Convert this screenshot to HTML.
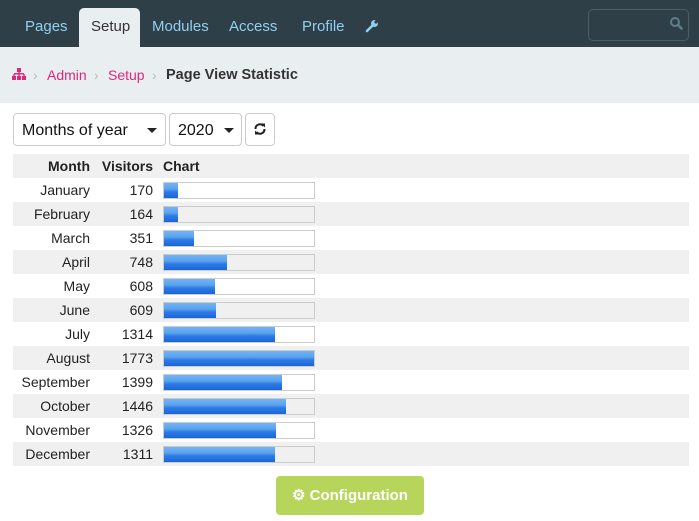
<!DOCTYPE html>
<html><head><style>
*{box-sizing:border-box;margin:0;padding:0}
body{width:699px;height:521px;background:#fff;font-family:"Liberation Sans",Arial,sans-serif;position:relative;overflow:hidden}
.nav{position:absolute;left:0;top:0;width:699px;height:47px;background:#2f3f47}
.nav span{position:absolute;top:18px;font-size:15px;color:#8fd0f0}
.tab{position:absolute;left:79px;top:8px;width:61px;height:39px;background:#e9eef1;border-radius:5px 5px 0 0}
.search{position:absolute;left:588px;top:9px;width:101px;height:32px;border:1px solid #4a5f68;border-radius:5px}
.bc{position:absolute;left:0;top:47px;width:699px;height:56px;background:#e9eef1}
.bc span{position:absolute;top:20px;font-size:14px;line-height:16px}
.sel{position:absolute;top:113px;height:33px;border:1px solid #ccc;border-radius:4px;font-size:16px;color:#111;padding:8px 0 0 8px}
.car{position:absolute;top:14px;width:0;height:0;border-left:5px solid transparent;border-right:5px solid transparent;border-top:5px solid #222}
table{position:absolute;left:13px;top:154px;width:676px;border-collapse:collapse;font-size:14px;color:#222}
td,th{height:24px;padding:0}
tr:nth-child(odd){background:#f0f0f0}
th{font-weight:bold;text-align:left}
.m{width:77px;text-align:right}
.v{width:63px;text-align:right}
.c{padding-left:10px}
.bar{width:152px;height:17px;border:1px solid #ccc;background:#fff;position:relative}
tr:nth-child(odd) .bar{background:#f0f0f0}
.bar i{position:absolute;left:0;top:0;height:15px;background:linear-gradient(#72b4f2 0%,#5aa2ee 40%,#2e7ae6 60%,#1a66d8 100%)}
.btn{position:absolute;left:276px;top:476px;width:148px;height:39px;background:#b6d55a;border-radius:4px;color:#fff;font-weight:bold;font-size:15px;text-align:center;line-height:39px}
</style></head><body>
<div class="nav">
<div class="tab"></div>
<span style="left:25px">Pages</span>
<span style="left:91px;color:#333">Setup</span>
<span style="left:152px">Modules</span>
<span style="left:229px">Access</span>
<span style="left:302px">Profile</span>
<svg style="position:absolute;left:365px;top:19px" width="14" height="14" viewBox="0 0 14 14"><path d="M2 12 L7.5 6.5" stroke="#8fd0f0" stroke-width="2.6" stroke-linecap="round"/><circle cx="9.5" cy="4.5" r="3.5" fill="#8fd0f0"/><circle cx="11" cy="3" r="1.6" fill="#2f3f47"/></svg>
<div class="search"><svg style="position:absolute;left:80px;top:6px" width="14" height="14" viewBox="0 0 14 14"><circle cx="6" cy="6" r="4" fill="none" stroke="#5e7e8c" stroke-width="2"/><path d="M9 9 L12.5 12.5" stroke="#5e7e8c" stroke-width="2.4" stroke-linecap="round"/></svg></div>
</div>
<div class="bc">
<svg style="position:absolute;left:12px;top:21px" width="14" height="12" viewBox="0 0 14 12"><rect x="5" y="0" width="4" height="4" fill="#e0287a"/><rect x="2" y="5" width="10" height="1.5" fill="#e0287a"/><rect x="0" y="8" width="4" height="4" fill="#e0287a"/><rect x="5" y="8" width="4" height="4" fill="#e0287a"/><rect x="10" y="8" width="4" height="4" fill="#e0287a"/><rect x="6.3" y="4" width="1.4" height="4" fill="#e0287a"/><rect x="1.3" y="6" width="1.4" height="2" fill="#e0287a"/><rect x="11.3" y="6" width="1.4" height="2" fill="#e0287a"/></svg>
<span style="left:33px;color:#bbb">›</span>
<span style="left:47px;color:#e0287a">Admin</span>
<span style="left:94px;color:#bbb">›</span>
<span style="left:108px;color:#e0287a">Setup</span>
<span style="left:152px;color:#bbb">›</span>
<span style="left:166px;color:#333;font-weight:bold;font-size:14.5px">Page View Statistic</span>
</div>
<div class="sel" style="left:13px;width:153px">Months of year<div class="car" style="left:133px"></div></div>
<div class="sel" style="left:169px;width:73px">2020<div class="car" style="left:54px"></div></div>
<div class="sel" style="left:245px;width:30px;height:33px;padding:0"><svg style="position:absolute;left:7px;top:8px" width="14" height="14" viewBox="0 0 14 14"><path d="M2.5 7 A4.5 4.5 0 0 1 10.5 4" fill="none" stroke="#222" stroke-width="2"/><path d="M8 1.5 L12 1.5 L12 5.5 Z" fill="#222"/><path d="M11.5 7 A4.5 4.5 0 0 1 3.5 10" fill="none" stroke="#222" stroke-width="2"/><path d="M6 12.5 L2 12.5 L2 8.5 Z" fill="#222"/></svg></div>
<table>
<tr><th class="m">Month</th><th class="v">Visitors</th><th class="c">Chart</th></tr>
<tr><td class="m">January</td><td class="v">170</td><td class="c"><div class="bar"><i style="width:14px"></i></div></td></tr>
<tr><td class="m">February</td><td class="v">164</td><td class="c"><div class="bar"><i style="width:14px"></i></div></td></tr>
<tr><td class="m">March</td><td class="v">351</td><td class="c"><div class="bar"><i style="width:30px"></i></div></td></tr>
<tr><td class="m">April</td><td class="v">748</td><td class="c"><div class="bar"><i style="width:63px"></i></div></td></tr>
<tr><td class="m">May</td><td class="v">608</td><td class="c"><div class="bar"><i style="width:51px"></i></div></td></tr>
<tr><td class="m">June</td><td class="v">609</td><td class="c"><div class="bar"><i style="width:52px"></i></div></td></tr>
<tr><td class="m">July</td><td class="v">1314</td><td class="c"><div class="bar"><i style="width:111px"></i></div></td></tr>
<tr><td class="m">August</td><td class="v">1773</td><td class="c"><div class="bar"><i style="width:150px"></i></div></td></tr>
<tr><td class="m">September</td><td class="v">1399</td><td class="c"><div class="bar"><i style="width:118px"></i></div></td></tr>
<tr><td class="m">October</td><td class="v">1446</td><td class="c"><div class="bar"><i style="width:122px"></i></div></td></tr>
<tr><td class="m">November</td><td class="v">1326</td><td class="c"><div class="bar"><i style="width:112px"></i></div></td></tr>
<tr><td class="m">December</td><td class="v">1311</td><td class="c"><div class="bar"><i style="width:111px"></i></div></td></tr>
</table>
<div class="btn">⚙ Configuration</div>
</body></html>
